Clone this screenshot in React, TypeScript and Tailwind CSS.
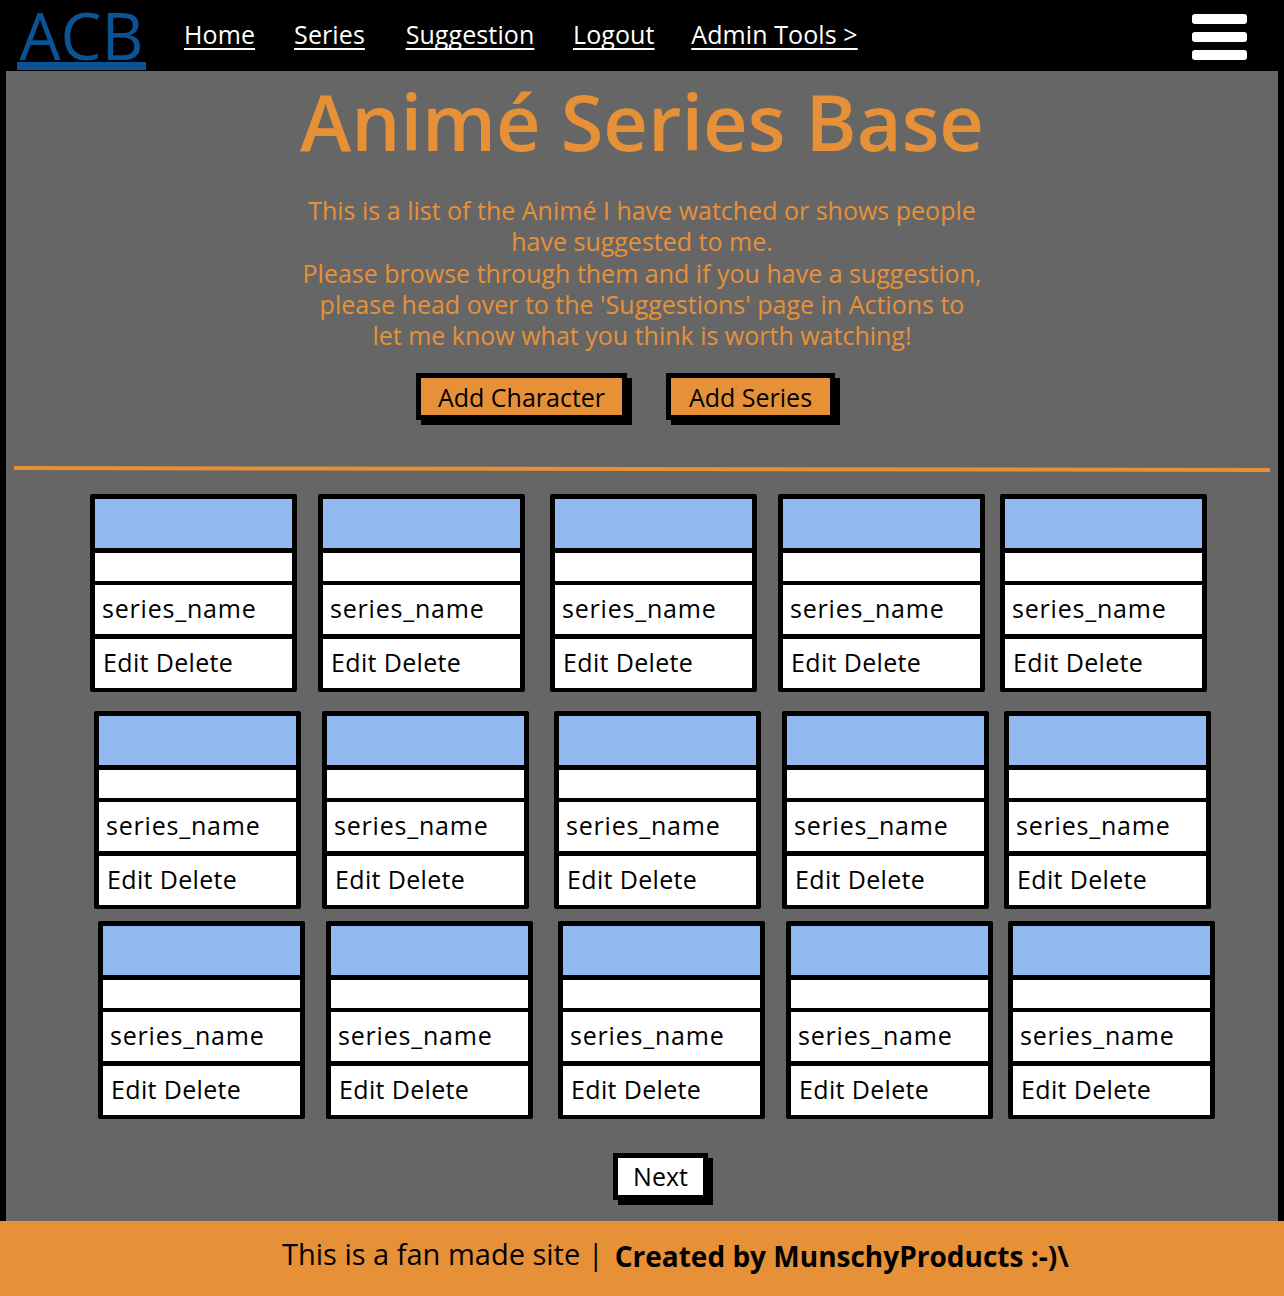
const navLinks = [
  { label: "Home", cls: "w-[71px]" },
  { label: "Series", cls: "w-[75px]" },
  { label: "Suggestion", cls: "w-[132px]" },
  { label: "Logout", cls: "w-[81px]" },
  { label: "Admin Tools >", cls: "w-[167px]" },
];

// gaps between cards are not even in the mockup
const cardGaps = ["ml-0", "ml-[21px]", "ml-[25px]", "ml-[21px]", "ml-[15px]"];

const rows = [
  { id: 1, cls: "mt-[23px] pl-[84px]" },
  { id: 2, cls: "mt-[19px] pl-[88px]" },
  { id: 3, cls: "mt-[12px] pl-[92px]" },
];

function SeriesCard({ className }: { className: string }) {
  return (
    <div className={`flex w-[207px] shrink-0 flex-col bg-black px-[5px] pb-[4px] pt-[5px] rounded-[2px] ${className}`}>
      <div className="h-[49px] bg-[#93baf0]" />
      <div className="mt-[5px] h-[28px] bg-white" />
      <div className="mt-[4px] flex h-[49px] items-center bg-white pb-[3px] pl-[7px] text-[25px] font-medium tracking-[0.8px] text-black">
        series_name
      </div>
      <div className="mt-[5px] flex h-[49px] items-center bg-white pb-[3px] pl-[8px] text-[25px] font-medium tracking-[0.35px] text-black">
        Edit Delete
      </div>
    </div>
  );
}

function ActionButton({ label, className }: { label: string; className: string }) {
  return (
    <button
      className={`flex h-[47px] items-center justify-center border-[5px] border-black bg-[#e69138] pt-[1px] text-[25px] font-medium text-black shadow-[5px_5px_0_#000] ${className}`}
    >
      {label}
    </button>
  );
}

export default function App() {
  return (
    <div className="flex h-[1296px] w-[1284px] flex-col overflow-hidden bg-white font-['Open_Sans',sans-serif]">
      {/* Top nav */}
      <header className="flex h-[71px] shrink-0 items-start bg-black">
        <a className="ml-[17px] mt-[8px] h-[62px] w-[129px] border-b-[8px] border-[#0b5394] text-center text-[65px] font-medium leading-[54px] text-[#0b5394]">
          ACB
        </a>
        <nav className="ml-[38px] mt-[16px] flex gap-[37px] text-[25px] font-medium leading-[36px] tracking-[0.1px] text-white">
          {navLinks.map((link) => (
            <a
              key={link.label}
              className={`${link.cls} whitespace-nowrap text-center underline decoration-2 underline-offset-[4px] [text-decoration-skip-ink:none]`}
            >
              {link.label}
            </a>
          ))}
        </nav>
        <div className="ml-auto mr-[37px] mt-[14px] flex w-[55px] flex-col gap-[8px]">
          <span className="h-[10px] rounded-[3px] bg-white" />
          <span className="h-[10px] rounded-[3px] bg-white" />
          <span className="h-[10px] rounded-[3px] bg-white" />
        </div>
      </header>

      <main className="flex flex-1 flex-col border-l-[6px] border-r-[6px] border-black bg-[#666666]">
        <h1 className="mt-[2px] text-center text-[77.5px] font-semibold leading-[96px] text-[#e69138]">
          Animé Series Base
        </h1>
        <p className="mx-auto mt-[26px] w-[700px] text-center text-[25px] leading-[31.25px] text-[#e69138]">
          This is a list of the Animé I have watched or shows people
          <br />
          have suggested to me.
          <br />
          Please browse through them and if you have a suggestion,
          <br />
          please head over to the 'Suggestions' page in Actions to
          <br />
          let me know what you think is worth watching!
        </p>
        <div className="ml-[410px] mt-[22px] flex gap-[39px]">
          <ActionButton label="Add Character" className="w-[211px]" />
          <ActionButton label="Add Series" className="w-[169px]" />
        </div>
        <hr className="ml-[8px] mr-[8px] mt-[47px] h-[4px] rotate-[0.09deg] border-0 bg-[#e69138]" />

        {rows.map((row) => (
          <div key={row.id} className={`flex ${row.cls}`}>
            {cardGaps.map((gap, i) => (
              <SeriesCard key={i} className={gap} />
            ))}
          </div>
        ))}

        <button className="ml-[607px] mt-[34px] flex h-[47px] w-[95px] items-center justify-center border-[5px] border-black bg-white text-[25px] font-medium text-black shadow-[5px_5px_0_#000]">
          Next
        </button>
      </main>

      <footer className="flex h-[75px] shrink-0 items-center bg-[#e69138] pb-[9px] pl-[282px] text-[29px] text-black">
        <span>This is a fan made site |</span>
        <span className="ml-[11px] mt-[3px] text-[28px] font-bold">Created by MunschyProducts :-)\</span>
      </footer>
    </div>
  );
}
